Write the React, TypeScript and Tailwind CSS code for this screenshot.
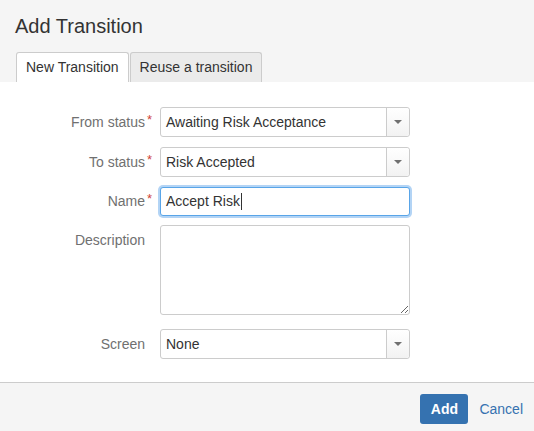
import React from "react";

const labelCls =
  "relative w-[145px] shrink-0 text-right text-[14px] leading-[20px] text-[#707070]";

const Required = () => (
  <span className="absolute left-full top-[-4px] ml-[2px] text-[13px] leading-[20px] text-[#d04437]">*</span>
);

const SelectBox = (props: { value: string }) => {
  return (
    <div className="flex h-[30px] w-[250px] items-stretch rounded-[3px] border border-[#cccccc] bg-white">
      <div className="flex flex-1 items-center pl-[5px] text-[14px] text-[#333333]">
        {props.value}
      </div>
      <div className="flex w-[23px] items-center justify-center rounded-r-[3px] border-l border-[#cccccc] bg-gradient-to-b from-white to-[#f2f2f2]">
        <svg width="8" height="4" viewBox="0 0 8 4">
          <path d="M0 0 L8 0 L4 4 Z" fill="#707070" />
        </svg>
      </div>
    </div>
  );
};

export default function App() {
  return (
    <div
      className="flex h-[431px] w-[534px] flex-col overflow-hidden bg-[#f5f5f5] text-[#333333]"
      style={{ fontFamily: '"Liberation Sans", Arial, sans-serif' }}
    >
      {/* header + tabs */}
      <div className="h-[82px] shrink-0 px-[16px] pt-[14px]">
        <h2 className="ml-[-1px] text-[20px] leading-[24px] text-[#333333]">Add Transition</h2>
        <div className="mt-[14px] flex gap-[1px]">
          <div className="flex h-[30px] items-center rounded-t-[3px] border border-b-0 border-[#cccccc] bg-white px-[9px] text-[14px] text-[#333333]">
            New Transition
          </div>
          <div className="flex h-[30px] items-center rounded-t-[3px] border border-b-0 border-[#cccccc] bg-[#ebebeb] px-[9px] text-[14px] text-[#333333]">
            Reuse a transition
          </div>
        </div>
      </div>

      {/* form */}
      <div className="flex h-[300px] shrink-0 flex-col bg-white pt-[25px]">
        <div className="flex h-[30px] items-center gap-[15px]">
          <label className={labelCls}>
            <span className="relative">
              From status
              <Required />
            </span>
          </label>
          <SelectBox value="Awaiting Risk Acceptance" />
        </div>
        <div className="mt-[10px] flex h-[30px] items-center gap-[15px]">
          <label className={labelCls}>
            <span className="relative">
              To status
              <Required />
            </span>
          </label>
          <SelectBox value="Risk Accepted" />
        </div>
        <div className="mt-[9px] flex h-[30px] items-center gap-[15px]">
          <label className={labelCls}>
            <span className="relative">
              Name
              <Required />
            </span>
          </label>
          <div className="flex h-[29px] w-[250px] items-center rounded-[3px] border border-[#59a5e8] bg-white pl-[5px] text-[14px] text-[#333333] shadow-[0_0_0_2px_#b3d4f5]">
            Accept Risk
            <span className="ml-[1px] h-[17px] w-[1px] bg-[#333333]" />
          </div>
        </div>
        <div className="mt-[9px] flex h-[90px] items-start gap-[15px]">
          <label className={`${labelCls} pt-[5px]`}>Description</label>
          <textarea
            readOnly
            className="block h-[90px] w-[250px] resize rounded-[3px] border border-[#cccccc] bg-white outline-none"
          />
        </div>
        <div className="mt-[14px] flex h-[30px] items-center gap-[15px]">
          <label className={labelCls}>Screen</label>
          <SelectBox value="None" />
        </div>
      </div>

      {/* footer */}
      <div className="flex flex-1 items-start justify-end gap-[11px] border-t border-[#cccccc] pr-[11px] pt-[11px]">
        <button className="h-[30px] w-[48px] rounded-[3px] bg-[#3572b0] text-[14px] font-bold text-white">
          Add
        </button>
        <a className="flex h-[30px] items-center text-[14px] text-[#3572b0]">Cancel</a>
      </div>
    </div>
  );
}
